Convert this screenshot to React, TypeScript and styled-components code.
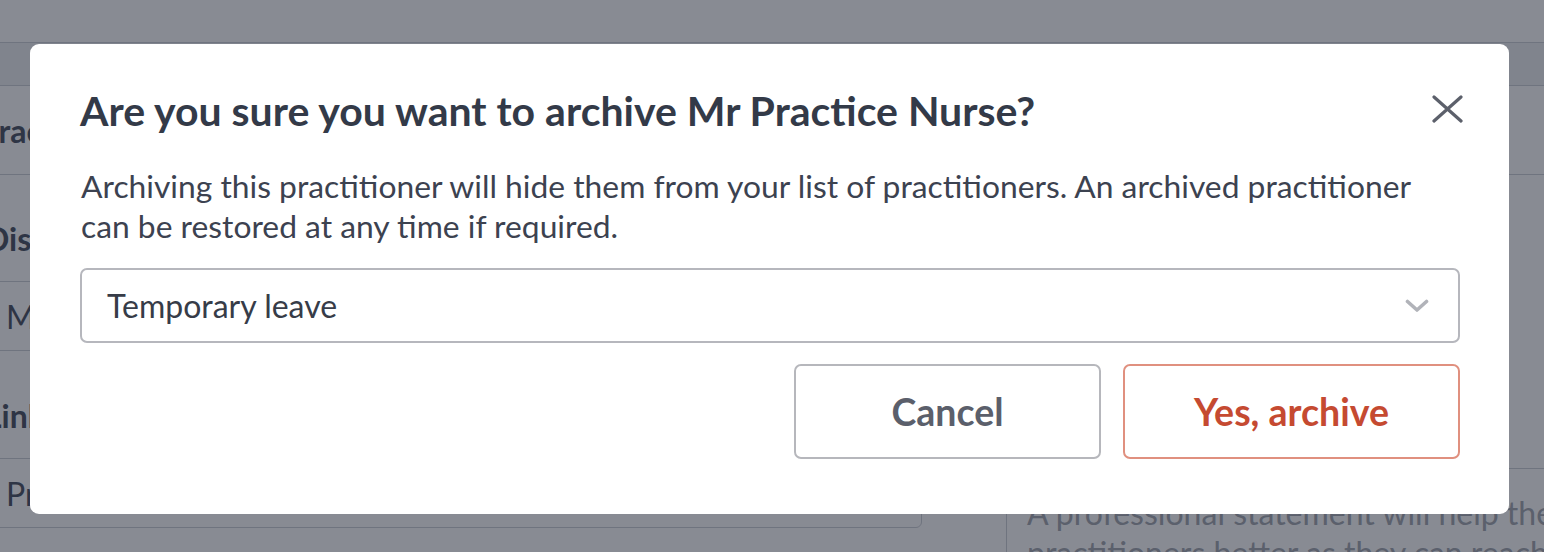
import React from "react";
import styled, { createGlobalStyle } from "styled-components";

const GlobalStyle = createGlobalStyle`
  html, body {
    margin: 0;
    padding: 0;
    width: 100%;
    height: 100%;
    overflow: hidden;
    background: #ffffff;
    font-family: Lato, "Noto Sans", sans-serif;
  }
  * { box-sizing: border-box; }
`;

/* ---------- background page ---------- */

const Page = styled.div`
  width: 1544px;
  height: 552px;
  overflow: hidden;
  display: flex;
  flex-direction: column;
  background: #ffffff;
`;

const TopBar = styled.div`
  height: 43px;
  flex: none;
  border-bottom: 1px solid #cdd0d6;
`;

const Band = styled.div`
  height: 43px;
  flex: none;
  background: #eff0f2;
  border-bottom: 1px solid #cdd0d6;
`;

const SectionRow = styled.div`
  height: 89px;
  flex: none;
  display: flex;
  align-items: center;
  border-bottom: 1px solid #cdd0d6;
`;

const SectionTitle = styled.div`
  margin-left: -21px;
  font-size: 32px;
  font-weight: 700;
  color: #4b5263;
  white-space: nowrap;
`;

const Content = styled.div`
  display: flex;
  gap: 84px;
  padding-top: 44px;
`;

const FormCol = styled.div`
  margin-left: -15px;
  width: 937px;
  flex: none;
  display: flex;
  flex-direction: column;
`;

const Label = styled.div<{ $gap?: number }>`
  font-size: 32px;
  line-height: 40px;
  font-weight: 700;
  color: #4b5263;
  white-space: nowrap;
  margin-top: ${(p) => p.$gap ?? 0}px;
  margin-bottom: 22px;
`;

const FakeInput = styled.div`
  height: 70px;
  border: 1px solid #cdd0d6;
  border-radius: 6px;
  padding: 0 20px;
  display: flex;
  align-items: center;
  font-size: 32px;
  color: #4b5263;
  white-space: nowrap;
`;

const SideCol = styled.div`
  flex: 1;
  display: flex;
  flex-direction: column;
  padding-top: 249px;
`;

const TextArea = styled.div`
  border: 1px solid #cdd0d6;
  border-right: none;
  border-radius: 6px 0 0 6px;
  padding: 24px 20px;
  height: 200px;
  font-size: 32px;
  line-height: 40px;
  color: #a4a8b1;
  white-space: nowrap;
`;

/* ---------- overlay + dialog ---------- */

const Overlay = styled.div`
  position: fixed;
  inset: 0;
  background: rgba(17, 24, 39, 0.5);
  display: flex;
  align-items: flex-start;
  padding: 44px 0 0 30px;
`;

const Dialog = styled.div`
  width: 1479px;
  height: 470px;
  background: #ffffff;
  border-radius: 9px;
  padding: 42px 49px 0 50px;
  display: flex;
  flex-direction: column;
`;

const Header = styled.div`
  display: flex;
  align-items: flex-start;
  justify-content: space-between;
`;

const Title = styled.h2`
  margin: 0;
  font-size: 41px;
  line-height: 50px;
  font-weight: 700;
  color: #333a48;
  white-space: nowrap;
`;

const CloseButton = styled.button`
  border: none;
  background: transparent;
  padding: 0;
  margin: 9px -3px 0 0;
  width: 31px;
  height: 28px;
  display: flex;
  align-items: center;
  justify-content: center;
  cursor: pointer;
  color: #5c606b;
`;

const Body = styled.p`
  margin: 30px 0 0 1px;
  font-size: 31.8px;
  line-height: 40px;
  color: #3c4250;
`;

const Select = styled.div`
  margin-top: 22px;
  height: 75px;
  border: 2px solid #b6b7bd;
  border-radius: 7px;
  padding: 0 29px 0 25px;
  display: flex;
  align-items: center;
  justify-content: space-between;
  font-size: 32px;
  color: #373c48;
`;

const Actions = styled.div`
  margin-top: 21px;
  display: flex;
  justify-content: flex-end;
  gap: 22px;
`;

const Button = styled.button<{ $danger?: boolean; $w: number }>`
  width: ${(p) => p.$w}px;
  height: 95px;
  background: #ffffff;
  border: 2px solid ${(p) => (p.$danger ? "#e0907f" : "#b6b7bc")};
  border-radius: 7px;
  font-family: Lato, "Noto Sans", sans-serif;
  font-size: 37.5px;
  font-weight: 700;
  color: ${(p) => (p.$danger ? "#c54a31" : "#5b5f6b")};
  cursor: pointer;
`;

export default function App() {
  return (
    <>
      <GlobalStyle />
      <Page>
        <TopBar />
        <Band />
        <SectionRow>
          <SectionTitle>Practitioner details</SectionTitle>
        </SectionRow>
        <Content>
          <FormCol>
            <Label>Display name</Label>
            <FakeInput>Mr Practice Nurse</FakeInput>
            <Label $gap={45}>Link</Label>
            <FakeInput>Practice Nurse</FakeInput>
          </FormCol>
          <SideCol>
            <TextArea>
              A professional statement will help the
              <br />
              practitioners better as they can reach
            </TextArea>
          </SideCol>
        </Content>
      </Page>
      <Overlay>
        <Dialog role="dialog" aria-modal="true">
          <Header>
            <Title>Are you sure you want to archive Mr Practice Nurse?</Title>
            <CloseButton aria-label="Close">
              <svg width="31" height="28" viewBox="0 0 31 28" fill="none">
                <path
                  d="M2 2 L29 26 M29 2 L2 26"
                  stroke="currentColor"
                  strokeWidth="3.2"
                  strokeLinecap="round"
                />
              </svg>
            </CloseButton>
          </Header>
          <Body>
            Archiving this practitioner will hide them from your list of practitioners. An archived
            practitioner can be restored at any time if required.
          </Body>
          <Select>
            <span>Temporary leave</span>
            <svg width="24" height="14" viewBox="0 0 24 14" fill="none">
              <polyline
                points="2.5,2.5 12,11 21.5,2.5"
                stroke="#b1b3b9"
                strokeWidth="3.6"
                strokeLinecap="round"
                strokeLinejoin="round"
              />
            </svg>
          </Select>
          <Actions>
            <Button $w={307}>Cancel</Button>
            <Button $w={337} $danger>
              Yes, archive
            </Button>
          </Actions>
        </Dialog>
      </Overlay>
    </>
  );
}
